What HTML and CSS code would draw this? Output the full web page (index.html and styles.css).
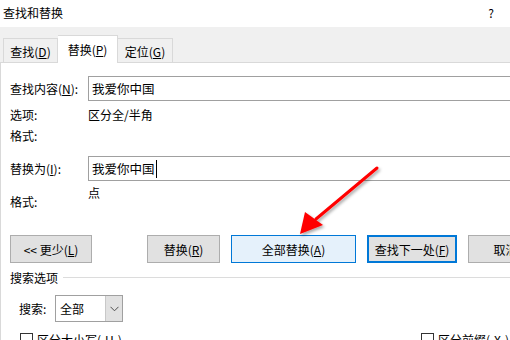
FILE: index.html
```html
<!DOCTYPE html>
<html lang="zh-CN">
<head>
    <meta charset="UTF-8">
    <title>查找和替换</title>
    <link rel="stylesheet" href="styles.css">
</head>
<body>
    <div class="titlebar">
        <span class="title">查找和替换</span>
        <span class="help">?</span>
    </div>

    <div class="tabstrip">
        <div class="tab">查找(<u>D</u>)</div>
        <div class="tab active">替换(<u>P</u>)</div>
        <div class="tab">定位(<u>G</u>)</div>
    </div>

    <div class="panel">
        <div class="field">
            <span class="label">查找内容(<u>N</u>):</span>
            <div class="textbox">我爱你中国</div>
        </div>
        <div class="info first">
            <span class="label">选项:</span>
            <span class="value">区分全/半角</span>
        </div>
        <div class="info">
            <span class="label">格式:</span>
        </div>
        <div class="field second">
            <span class="label">替换为(<u>I</u>):</span>
            <div class="textbox"><span class="caret">我爱你中国</span></div>
        </div>
        <div class="info format">
            <span class="label">格式:</span>
            <span class="value">点</span>
        </div>

        <div class="buttons">
            <div class="btn less">&lt;&lt; 更少(<u>L</u>)</div>
            <div class="btn replace">替换(<u>R</u>)</div>
            <div class="btn replace-all">全部替换(<u>A</u>)</div>
            <div class="btn find-next">查找下一处(<u>F</u>)</div>
            <div class="btn cancel">取消</div>
        </div>

        <div class="group-title">
            <span>搜索选项</span>
            <div class="rule"></div>
        </div>

        <div class="search-row">
            <span class="search-label">搜索:</span>
            <div class="select">
                <span class="select-text">全部</span>
                <span class="select-arrow">
                    <svg width="9" height="6" viewBox="0 0 9 6"><path d="M0.5 0.8 L4.5 4.8 L8.5 0.8" fill="none" stroke="#4d4d4d" stroke-width="1"/></svg>
                </span>
            </div>
        </div>

        <div class="checks">
            <label class="check"><span class="box"></span>区分大小写(<u>H</u>)</label>
            <label class="check right"><span class="box"></span>区分前缀(<u>X</u>)</label>
        </div>
    </div>

    <!-- red annotation arrow drawn over the dialog -->
    <svg class="arrow" width="510" height="340" viewBox="0 0 510 340">
        <defs>
            <filter id="shadow" x="-20%" y="-20%" width="140%" height="140%">
                <feDropShadow dx="1.5" dy="2" stdDeviation="1.5" flood-color="#000" flood-opacity="0.35"/>
            </filter>
        </defs>
        <g filter="url(#shadow)">
            <line x1="377" y1="168" x2="316" y2="219" stroke="#ff0000" stroke-width="3" stroke-linecap="round"/>
            <polygon points="300,234 305,212 323,225" fill="#ff0000"/>
        </g>
    </svg>
</body>
</html>
```

FILE: styles.css
```css
body {
    margin: 0;
    width: 510px;
    height: 340px;
    overflow: hidden;
    background: #fff;
    font-family: "Noto Sans CJK SC", "Noto Sans", sans-serif;
    font-size: 12px;
    color: #000;
    position: relative;
}

u {
    text-decoration: underline;
    text-underline-offset: 1px;
}

.titlebar {
    height: 27px;
    display: flex;
    justify-content: space-between;
    align-items: center;
    padding: 0 16px 2px 3px;
    box-sizing: border-box;
}

.title {
    font-size: 12px;
}

.help {
    font-size: 12px;
}

.tabstrip {
    height: 36px;
    background: #f0f0f0;
    border-bottom: 1px solid #d9d9d9;
    box-sizing: border-box;
    display: flex;
    align-items: flex-end;
    padding-left: 3px;
}

.tab {
    height: 24px;
    border: 1px solid #d9d9d9;
    border-bottom: none;
    box-sizing: border-box;
    display: flex;
    align-items: center;
    justify-content: center;
    width: 55px;
    line-height: 1;
    padding-top: 3px;
}

.tab + .tab {
    border-left: none;
}

.tab.active {
    height: 28px;
    width: 60px;
    background: #fff;
    margin-bottom: -1px;
    border-left: none;
    border-right: 1px solid #d9d9d9;
    padding-top: 1px;
}

.tab.active + .tab {
    border-left: none;
}

.panel {
    border-left: 1px solid #d9d9d9;
    padding: 13px 0 0 9px;
    height: 277px;
}

.label {
    width: 78px;
    flex: none;
}

.field {
    display: flex;
    align-items: center;
    height: 25px;
}

.field.second {
    margin-top: 10px;
}

.textbox {
    width: 440px;
    height: 25px;
    box-sizing: border-box;
    border: 1px solid #a0a0a0;
    padding-left: 3px;
    display: flex;
    align-items: center;
    font-size: 12.5px;
    flex: none;
}

.caret {
    border-right: 1px solid #000;
    padding-right: 1px;
    line-height: 18px;
}

.info {
    display: flex;
    align-items: center;
    height: 21px;
}

.info.first {
    margin-top: 3px;
}

.info.format {
    height: 28px;
    align-items: flex-start;
}

.info.format .label {
    padding-top: 12px;
}

.info.format .value {
    padding-top: 3px;
}

.buttons {
    display: flex;
    gap: 11px;
    margin-top: 26px;
    height: 28px;
}

.btn {
    height: 28px;
    box-sizing: border-box;
    border: 1px solid #adadad;
    background: #e1e1e1;
    display: flex;
    align-items: center;
    justify-content: center;
    flex: none;
}

.less {
    width: 82px;
}

.replace {
    width: 73px;
    margin-left: 44px;
}

.replace-all {
    width: 125px;
    background: #e5f1fb;
    border-color: #0078d7;
}

.find-next {
    width: 90px;
    border: 2px solid #0078d7;
}

.cancel {
    width: 75px;
}

.group-title {
    display: flex;
    align-items: center;
    height: 20px;
    margin-top: 4px;
}

.rule {
    flex: 1;
    height: 1px;
    background: #dcdcdc;
    margin-left: 5px;
}

.search-row {
    display: flex;
    align-items: center;
    margin-top: 8px;
    padding-left: 9px;
}

.search-label {
    width: 36px;
}

.select {
    width: 68px;
    height: 27px;
    box-sizing: border-box;
    border: 1px solid #a0a0a0;
    display: flex;
}

.select-text {
    flex: 1;
    display: flex;
    align-items: center;
    padding-left: 4px;
}

.select-arrow {
    width: 16px;
    background: #e1e1e1;
    border-left: 1px solid #c8c8c8;
    display: flex;
    align-items: center;
    justify-content: center;
}

.checks {
    display: flex;
    margin-top: 9px;
    padding-left: 10px;
}

.check {
    display: flex;
    align-items: center;
    gap: 4px;
}

.check.right {
    margin-left: auto;
    margin-right: 1px;
}

.box {
    width: 13px;
    height: 13px;
    box-sizing: border-box;
    border: 1px solid #333;
    background: #fff;
}

.arrow {
    position: absolute;
    left: 0;
    top: 0;
    pointer-events: none;
}
```
